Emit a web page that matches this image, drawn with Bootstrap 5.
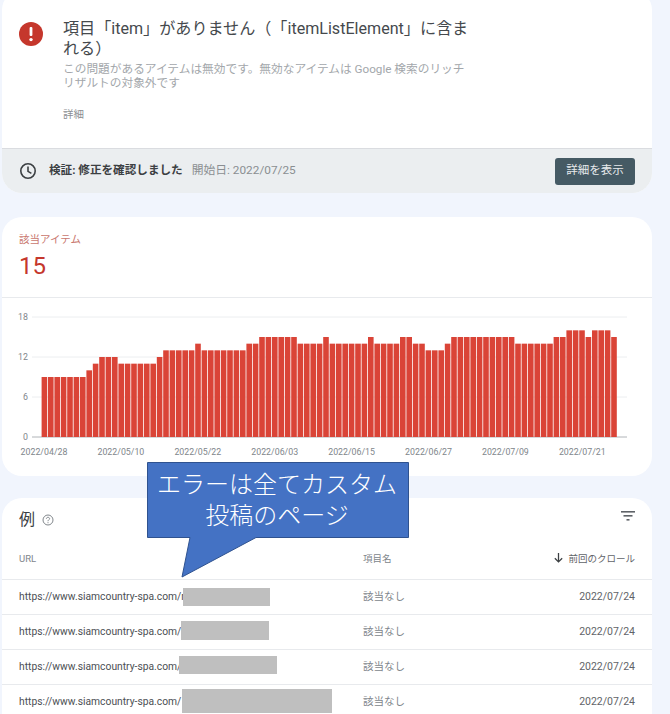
<!DOCTYPE html>
<html lang="ja">
<head>
  <meta charset="UTF-8">
  <title>Search Console item error</title>
  <link href="https://cdn.jsdelivr.net/npm/bootstrap@5.3.0/dist/css/bootstrap.min.css" rel="stylesheet">
  <style>
    html, body { height: 714px; overflow: hidden; }
    body { background: #f1f5fd; font-family: Roboto, "Noto Sans CJK JP", sans-serif; color: #3c4043; }
    .page { position: relative; width: 670px; height: 714px; overflow: hidden; padding-left: 2px; }
    .sheet { width: 650px; background: #fff; border-radius: 20px; overflow: hidden; }

    .issue-card { margin-top: -10px; height: 203px; }
    .issue-main { height: 158px; padding: 29px 0 0 17px; }
    .issue-icon { width: 24px; height: 24px; margin-top: 3px; margin-right: 21px; flex: none; }
    .issue-title { font-size: 16.1px; line-height: 19.5px; white-space: nowrap; color: #45494d; margin-left: -1px; text-spacing-trim: space-all; }
    .issue-desc { font-size: 11.7px; line-height: 14px; white-space: nowrap; color: #a3a7ab; margin-top: 4px; margin-left: -1px; }
    .issue-more { font-size: 10.5px; line-height: 14px; color: #8a8e92; margin-top: 18px; margin-left: -1px; }
    .issue-foot { height: 45px; background: #ebeef0; border-top: 1px solid #dadce0; padding: 0 17px; }
    .foot-icon { width: 18px; height: 18px; margin-right: 12px; }
    .foot-strong { font-size: 11.6px; font-weight: 700; color: #3c4043; margin-right: 9px; }
    .foot-date { font-size: 11.8px; color: #8a8e92; }
    .btn-detail { background: #455a64; color: #e8eaed; font-size: 11.5px; width: 80px; height: 27px; padding: 0; border-radius: 3px; border: 0; }

    .items-card { margin-top: 24px; height: 259px; }
    .items-head { height: 81px; border-bottom: 1px solid #e8eaed; padding: 16px 0 0 17px; }
    .items-label { font-size: 10.5px; line-height: 14px; color: #c9766d; }
    .items-count { font-size: 24px; line-height: 28px; color: #c5372c; margin-top: 5px; }
    .chart-svg { display: block; }
    .chart-svg text { font-family: Roboto, sans-serif; font-size: 8.8px; fill: #80868b; }

    .examples-card { margin-top: 22px; height: 240px; }
    .examples-head { height: 42px; padding: 2px 17px 0; }
    .examples-title { font-size: 16px; color: #3c4043; margin-right: 7px; }
    .help-icon { width: 12px; height: 12px; }
    .filter-icon { width: 16px; height: 16px; margin-right: -1px; margin-top: -8px; }

    .url-table { table-layout: fixed; width: 650px; margin: 0; --bs-table-color: #5f6368; --bs-table-border-color: #e8eaed; }
    .url-table th, .url-table td { padding: 0; height: 35px; vertical-align: middle; font-size: 10.5px; font-weight: 400; }
    .url-table thead th { height: 39px; font-size: 9.5px; color: #80868b; }
    .col-url { width: 361px; }
    .col-name { width: 150px; }
    .cell-url { padding-left: 17px !important; position: relative; color: #4b4f53 !important; white-space: nowrap; overflow: hidden; font-size: 10.3px !important; }
    .url-table th.cell-url { color: #80868b !important; font-size: 9.5px !important; }
    .cell-name { color: #80868b !important; }
    .cell-date { text-align: right; padding-right: 17px !important; color: #5f6368 !important; font-size: 10.5px; }
    .arrow-icon { width: 11px; height: 11px; margin-right: 4px; vertical-align: -1px; }
    .blot { position: absolute; background: #bfbfbf; }
    .blot-1 { left: 181px; top: 8px; width: 87px; height: 18px; }
    .blot-2 { left: 179px; top: 6px; width: 88px; height: 19px; }
    .blot-3 { left: 177px; top: 6px; width: 98px; height: 18px; }
    .blot-4 { left: 180px; top: 4px; width: 150px; height: 24px; }
    .url-table tbody tr:last-child td { border-bottom: 0; }

    .balloon { position: absolute; left: 147px; top: 462px; width: 262px; height: 116px; }
    .balloon-shape { position: absolute; left: 0; top: 0; }
    .balloon-text { position: relative; width: 260px; height: 76px; padding-top: 5px; color: #fff; font-size: 24px; line-height: 31px; text-align: center; font-family: "Noto Sans CJK JP", sans-serif; font-weight: 300; }
  </style>
</head>
<body>
  <div class="page">

    <div class="sheet issue-card">
      <div class="issue-main d-flex">
        <svg class="issue-icon" viewBox="0 0 24 24"><circle cx="12" cy="12" r="12" fill="#c5372c"/><rect x="10.6" y="5" width="2.8" height="9" rx="1" fill="#fff"/><circle cx="12" cy="17.6" r="1.7" fill="#fff"/></svg>
        <div>
          <div class="issue-title">項目「item」がありません（「itemListElement」に含ま<br>れる）</div>
          <div class="issue-desc">この問題があるアイテムは無効です。無効なアイテムは Google 検索のリッチ<br>リザルトの対象外です</div>
          <div class="issue-more">詳細</div>
        </div>
      </div>
      <div class="issue-foot d-flex align-items-center">
        <svg class="foot-icon" viewBox="0 0 18 18" fill="none" stroke="#3c4043" stroke-width="1.6"><circle cx="9" cy="9" r="7.2"/><path d="M9 4.6V9.4L12.4 11.4"/></svg>
        <span class="foot-strong">検証: 修正を確認しました</span>
        <span class="foot-date">開始日: 2022/07/25</span>
        <button type="button" class="btn btn-detail ms-auto">詳細を表示</button>
      </div>
    </div>

    <div class="sheet items-card">
      <div class="items-head">
        <div class="items-label">該当アイテム</div>
        <div class="items-count">15</div>
      </div>
      <svg id="chart" class="chart-svg" width="650" height="178" viewBox="2 298 650 178"></svg>
    </div>

    <div class="sheet examples-card">
      <div class="examples-head d-flex align-items-center">
        <span class="examples-title">例</span>
        <svg class="help-icon" viewBox="0 0 12 12" fill="none" stroke="#80868b"><circle cx="6" cy="6" r="5"/><path d="M4.4 4.8C4.4 3.8 5.1 3.3 6 3.3S7.6 3.9 7.6 4.7C7.6 5.7 6 5.8 6 7.2"/><path d="M6 8.2V9.2"/></svg>
        <svg class="filter-icon ms-auto" viewBox="0 0 16 16" fill="#5f6368"><rect x="1" y="3" width="14" height="1.6"/><rect x="3.5" y="7" width="9" height="1.6"/><rect x="6.5" y="11" width="3" height="1.6"/></svg>
      </div>
      <table class="table url-table">
        <colgroup><col class="col-url"><col class="col-name"><col></colgroup>
        <thead>
          <tr>
            <th class="cell-url">URL</th>
            <th class="cell-name">項目名</th>
            <th class="cell-date">
              <svg class="arrow-icon" viewBox="0 0 12 12" fill="none" stroke="#3c4043" stroke-width="1.4"><path d="M6 1V10.5M2 6.8L6 10.8L10 6.8"/></svg>前回のクロール
            </th>
          </tr>
        </thead>
        <tbody>
          <tr>
            <td class="cell-url">https://www.siamcountry-spa.com/r<span class="blot blot-1"></span></td>
            <td class="cell-name">該当なし</td>
            <td class="cell-date">2022/07/24</td>
          </tr>
          <tr>
            <td class="cell-url">https://www.siamcountry-spa.com/<span class="blot blot-2"></span></td>
            <td class="cell-name">該当なし</td>
            <td class="cell-date">2022/07/24</td>
          </tr>
          <tr>
            <td class="cell-url">https://www.siamcountry-spa.com/<span class="blot blot-3"></span></td>
            <td class="cell-name">該当なし</td>
            <td class="cell-date">2022/07/24</td>
          </tr>
          <tr>
            <td class="cell-url">https://www.siamcountry-spa.com/<span class="blot blot-4"></span></td>
            <td class="cell-name">該当なし</td>
            <td class="cell-date">2022/07/24</td>
          </tr>
        </tbody>
      </table>
    </div>

    <!-- callout placed over the table -->
    <div class="balloon">
      <svg class="balloon-shape" width="262" height="116" viewBox="0 0 262 116">
        <path d="M.5 .5H261.5V75.5H109L35 115L43 75.5H.5Z" fill="#4472c4" stroke="#2f528f"/>
      </svg>
      <div class="balloon-text">エラーは全てカスタム<br>投稿のページ</div>
    </div>
  </div>

  <script src="https://cdn.jsdelivr.net/npm/bootstrap@5.3.0/dist/js/bootstrap.bundle.min.js"></script>
  <script>
    // daily counts, 2022/04/28 onward
    const runs = [[9,7],[10,1],[11,1],[12,3],[11,6],[12,1],[13,5],[14,1],[13,7],[14,2],[15,6],[14,4],[15,1],
      [14,6],[15,1],[14,4],[15,2],[14,2],[13,3],[14,1],[15,10],[14,6],[15,2],[16,3],[15,1],[16,3],[15,1]];
    const dates = ["2022/04/28","2022/05/10","2022/05/22","2022/06/03","2022/06/15","2022/06/27","2022/07/09","2022/07/21"];
    const base = 437, unit = 120 / 18, pitch = 6.4;
    let out = "";

    [18, 12, 6, 0].forEach(v => {
      const y = base - v * unit;
      out += `<line x1="32" x2="627" y1="${y}" y2="${y}" stroke="${v ? "#eceef0" : "#b0b4b8"}"/>`;
      out += `<text x="28" y="${y + 3}" text-anchor="end">${v}</text>`;
    });

    let i = 0;
    runs.forEach(([v, n]) => {
      for (let k = 0; k < n; k++, i++) {
        out += `<rect x="${41.6 + i * pitch}" y="${base - v * unit}" width="5.6" height="${v * unit}" fill="#da4437"/>`;
      }
    });

    dates.forEach((d, n) => {
      out += `<text x="${44 + n * 76.9}" y="455" text-anchor="middle">${d}</text>`;
    });
    document.getElementById("chart").innerHTML = out;
  </script>
</body>
</html>
